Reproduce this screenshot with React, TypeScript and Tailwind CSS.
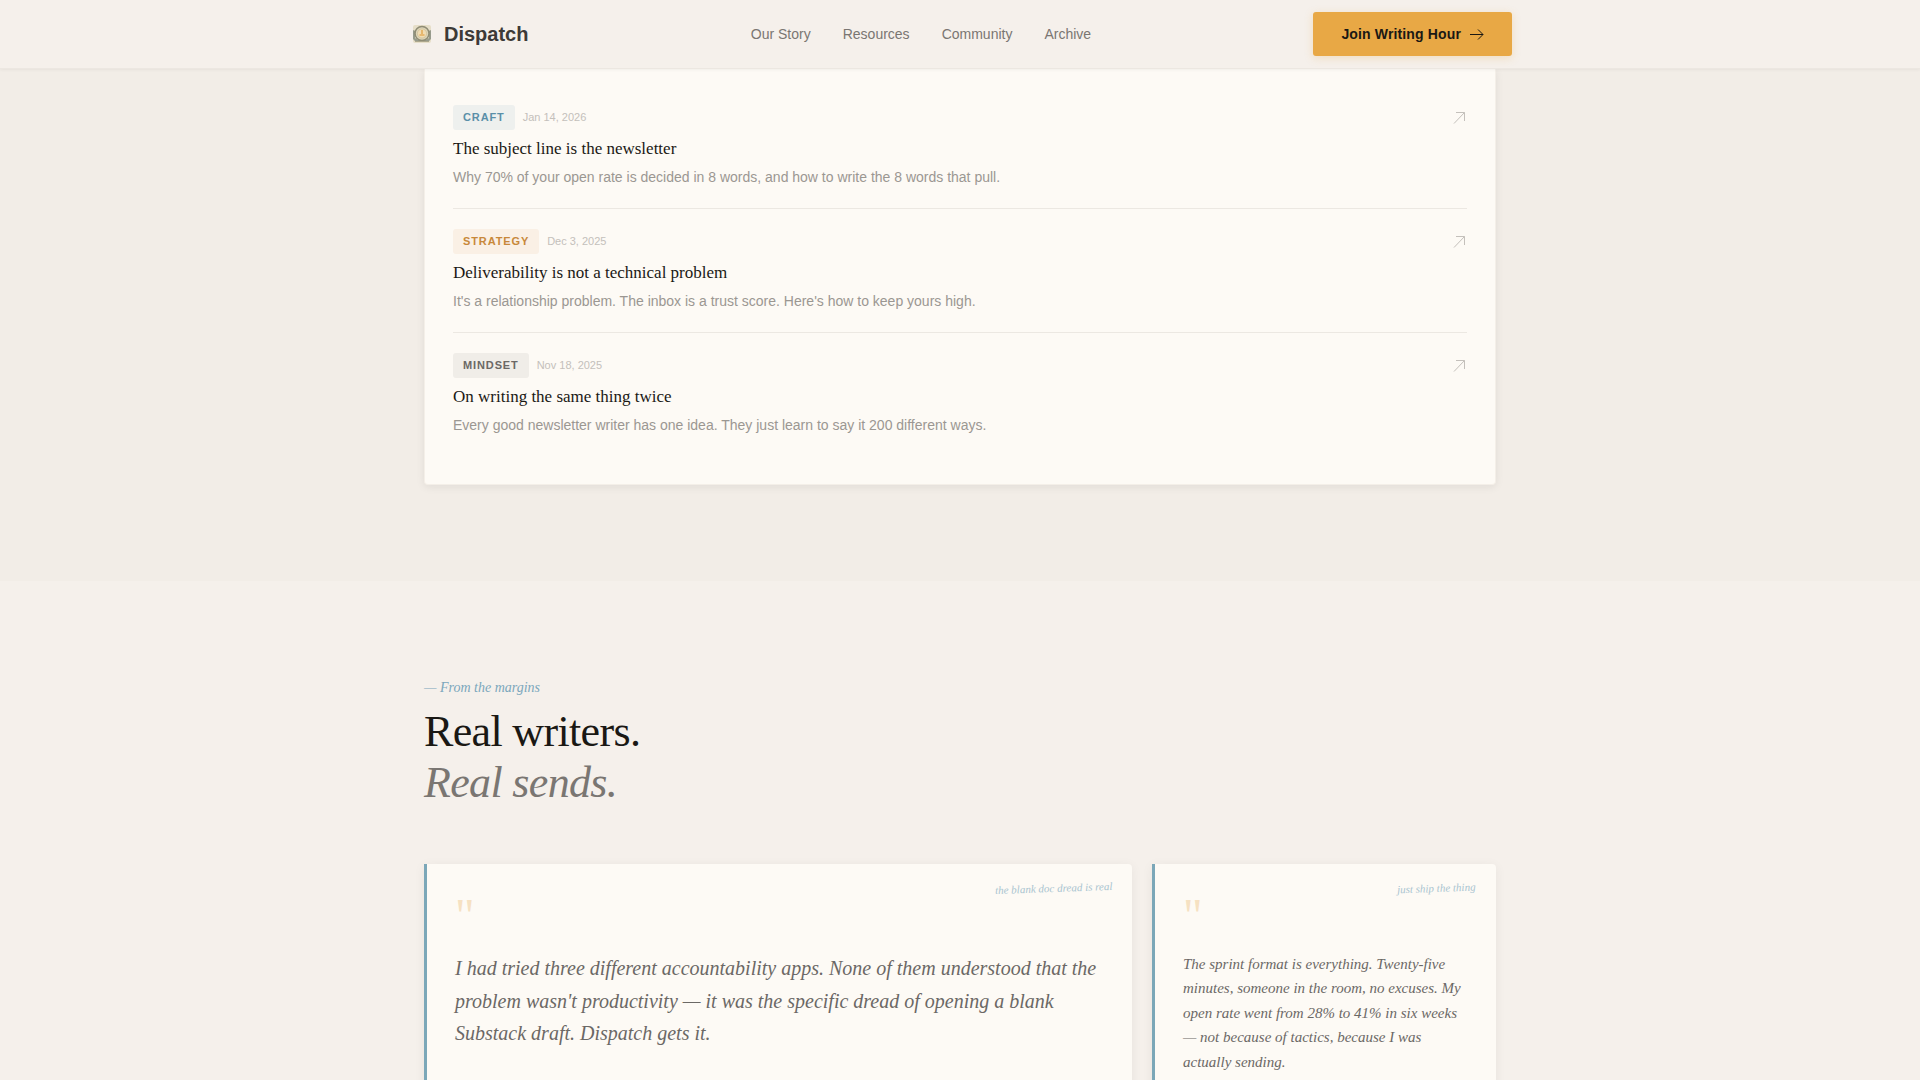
const links = ["Our Story", "Resources", "Community", "Archive"];

const articles = [
  {
    tag: "Craft",
    tagClass: "bg-[#eef0ee] text-[#5a8fa8]",
    date: "Jan 14, 2026",
    title: "The subject line is the newsletter",
    text: "Why 70% of your open rate is decided in 8 words, and how to write the 8 words that pull.",
  },
  {
    tag: "Strategy",
    tagClass: "bg-[#faf0e5] text-[#c8883a]",
    date: "Dec 3, 2025",
    title: "Deliverability is not a technical problem",
    text: "It's a relationship problem. The inbox is a trust score. Here's how to keep yours high.",
  },
  {
    tag: "Mindset",
    tagClass: "bg-[#f0ede8] text-[#6b6865]",
    date: "Nov 18, 2025",
    title: "On writing the same thing twice",
    text: "Every good newsletter writer has one idea. They just learn to say it 200 different ways.",
  },
];

const quotes = [
  {
    note: "the blank doc dread is real",
    text: "I had tried three different accountability apps. None of them understood that the problem wasn't productivity — it was the specific dread of opening a blank Substack draft. Dispatch gets it.",
    cardClass: "col-span-2",
    textClass: "text-xl leading-relaxed",
  },
  {
    note: "just ship the thing",
    text: "The sprint format is everything. Twenty-five minutes, someone in the room, no excuses. My open rate went from 28% to 41% in six weeks — not because of tactics, because I was actually sending.",
    cardClass: "col-span-1",
    textClass: "text-[15px] leading-relaxed",
  },
];

function Logo() {
  return (
    <svg viewBox="0 0 20 20" className="w-5 h-5" aria-hidden="true">
      <rect x="1" y="1" width="18" height="18" rx="2" fill="#e6dec8" />
      <path d="M1 6v9l3 3h12l3-3V6l-2 1v7l-3 2H6l-3-2V7z" fill="#979b8c" />
      <circle cx="10" cy="9.5" r="7" fill="#ddd5b9" stroke="#8f8c74" strokeWidth="1.6" />
      <circle cx="10" cy="9.5" r="4.6" fill="#f0dcb4" stroke="#cdbf98" strokeWidth="0.8" />
      <path d="M10 6v4M7.5 11h5" stroke="#e3ad5c" strokeWidth="1.6" />
      <path d="M3 17.5h14" stroke="#aca78d" strokeWidth="1" />
    </svg>
  );
}

function ArrowRight() {
  return (
    <svg viewBox="0 0 15 15" className="w-[15px] h-[15px]" fill="none" stroke="currentColor" aria-hidden="true">
      <path d="M1 7.5h13M9 2.5l5 5-5 5" />
    </svg>
  );
}

function ArrowUpRight() {
  return (
    <svg viewBox="0 0 14 14" className="mt-1.5 w-3.5 h-3.5 text-[#c4c0bb]" fill="none" stroke="currentColor" aria-hidden="true">
      <path d="M1 12.5l10.5-11M3 1.5h8.5V10" />
    </svg>
  );
}

function Header() {
  return (
    <header className="sticky top-0 z-20 border-b border-[#ece7e1] bg-[#f5f0eb] shadow-[0_1px_3px_rgba(26,24,20,0.05)]">
      <div className="mx-auto flex h-17 max-w-[1104px] items-center justify-between">
        <a href="#" className="flex items-center gap-3 pl-1 text-xl font-bold text-[#3d3a37]">
          <Logo />
          Dispatch
        </a>
        <nav className="flex gap-8 text-sm text-[#7a7672]">
          {links.map((link) => (
            <a key={link} href="#">
              {link}
            </a>
          ))}
        </nav>
        <button className="flex h-11 items-center gap-2 rounded-[3px] bg-[#e8a845] px-7 text-sm font-bold tracking-[0.01em] text-[#1a1814] shadow-[0_2px_8px_rgba(232,168,69,0.25)]">
          Join Writing Hour
          <ArrowRight />
        </button>
      </div>
    </header>
  );
}

function Articles() {
  return (
    <section className="bg-[#f2ede7] px-6 pb-24">
      <div className="mx-auto max-w-[1072px] rounded-b-[4px] border border-t-0 border-[#f4efe8] bg-[#fdfaf5] px-7 pt-4 pb-7 shadow-[0_2px_8px_rgba(26,24,20,0.08)]">
        {articles.map((article) => (
          <article key={article.title} className="border-b border-[#ece8e2] py-5 last:border-b-0">
            <div className="flex items-start justify-between">
              <div>
                <div className="flex items-center gap-2 text-[11px]">
                  <span className={`rounded-[3px] px-2.5 py-1 font-bold uppercase leading-[17px] tracking-[0.08em] ${article.tagClass}`}>
                    {article.tag}
                  </span>
                  <time className="text-[#c4c0bb]">{article.date}</time>
                </div>
                <h3 className="mt-2 text-[17px] leading-[22px] text-[#1a1814] font-['Liberation_Serif',serif]">{article.title}</h3>
                <p className="mt-1.5 text-sm leading-[22px] text-[#9b9792]">{article.text}</p>
              </div>
              <ArrowUpRight />
            </div>
          </article>
        ))}
      </div>
    </section>
  );
}

function Testimonials() {
  return (
    <section className="px-6 pt-24 pb-24 font-['Liberation_Serif',serif]">
      <div className="mx-auto max-w-[1072px]">
        <p className="text-sm italic leading-[21px] text-[#7ba7bc]">— From the margins</p>
        <h2 className="mt-2 text-[44px] leading-[51px] tracking-[-0.015em] text-[#1a1814]">
          Real writers.
          <br />
          <em className="text-[#7a7672]">Real sends.</em>
        </h2>
        <div className="mt-14 grid grid-cols-3 gap-5">
          {quotes.map((quote) => (
            <figure
              key={quote.note}
              className={`relative rounded-r-[4px] border-l-3 border-[#7ba7b8] bg-[#fdfaf5] p-7 shadow-[0_2px_12px_rgba(26,24,20,0.06)] ${quote.cardClass}`}
            >
              <span className="absolute top-4 right-5 -rotate-2 text-[11px] italic text-[#a9c4d0]">{quote.note}</span>
              <div className="mb-3 text-5xl leading-none text-[#f6e1c2]" aria-hidden="true">
                "
              </div>
              <blockquote className={`italic text-[#6b6865] ${quote.textClass}`}>{quote.text}</blockquote>
            </figure>
          ))}
        </div>
      </div>
    </section>
  );
}

export default function App() {
  return (
    <main className="min-h-screen bg-[#f5f0eb] font-['Liberation_Sans',Arial,sans-serif]">
      <Header />
      <Articles />
      <Testimonials />
    </main>
  );
}
